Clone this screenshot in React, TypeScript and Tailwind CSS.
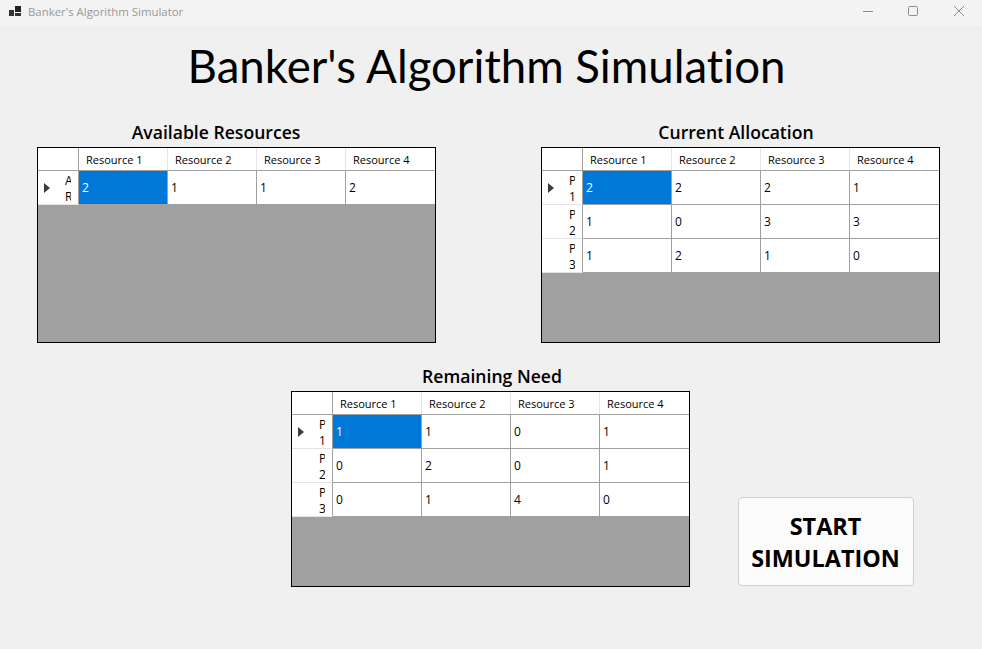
import React from 'react';

interface GridRow {
  label: [string, string];
  values: number[];
}

const available: GridRow[] = [{ label: ['A', 'R'], values: [2, 1, 1, 2] }];

const allocation: GridRow[] = [
  { label: ['P', '1'], values: [2, 2, 2, 1] },
  { label: ['P', '2'], values: [1, 0, 3, 3] },
  { label: ['P', '3'], values: [1, 2, 1, 0] },
];

const need: GridRow[] = [
  { label: ['P', '1'], values: [1, 1, 0, 1] },
  { label: ['P', '2'], values: [0, 2, 0, 1] },
  { label: ['P', '3'], values: [0, 1, 4, 0] },
];

const columns = ['Resource 1', 'Resource 2', 'Resource 3', 'Resource 4'];

// WinForms style DataGridView
const DataGrid = ({ title, titleClass, rows }: { title: string; titleClass: string; rows: GridRow[] }) => (
  <div className="flex w-[399px] flex-col">
    <h2 className={`mb-[3px] h-[24px] text-center text-[17.6px] leading-[24px] font-semibold text-black ${titleClass}`}>
      {title}
    </h2>
    <div className="flex h-[196px] flex-col border border-black bg-[#a0a0a0]">
      {/* Header */}
      <div className="flex h-[23px] border-b border-[#a0a0a0] bg-white">
        <div className="w-[41px] border-r border-[#a0a0a0]" />
        {columns.map((col) => (
          <div
            key={col}
            className="w-[89px] border-r border-[#e4e4e4] pl-[7px] text-[11px] leading-[23px] text-black last:border-r-0"
          >
            {col}
          </div>
        ))}
      </div>
      {/* Rows */}
      {rows.map((row, i) => (
        <div key={row.label[1]} className="flex h-[34px] bg-white">
          <div className="flex w-[41px] items-start border-r border-b border-r-[#a0a0a0] border-b-[#e4e4e4] bg-white">
            <div className="mt-[12px] ml-[6px] w-[6px]">
              {i === 0 && (
                <svg className="block" width="6" height="10" viewBox="0 0 6 10">
                  <path d="M0 0L6 5L0 10Z" fill="#3c3c3c" />
                </svg>
              )}
            </div>
            <div className="mt-[2px] ml-[15px] h-[31px] w-[6px] overflow-hidden text-[12px] leading-[16px] text-black">
              <div>{row.label[0]}</div>
              <div>{row.label[1]}</div>
            </div>
          </div>
          {row.values.map((value, j) => (
            <div
              key={j}
              className={
                i === 0 && j === 0
                  ? 'w-[89px] border-r border-b border-[#a0a0a0] bg-[#0078d7] pl-[3px] text-[12px] leading-[33px] text-white'
                  : 'w-[89px] border-r border-b border-[#a0a0a0] pl-[3px] text-[12px] leading-[33px] text-black last:border-r-0'
              }
            >
              {value}
            </div>
          ))}
        </div>
      ))}
    </div>
  </div>
);

export default function App() {
  return (
    <div className="flex h-[649px] w-[982px] flex-col overflow-hidden bg-[#f0f0f0] font-['Open_Sans','Noto_Sans',sans-serif]">
      {/* Title bar */}
      <div className="flex h-[26px] items-start justify-between bg-[#f3f3f3]">
        <div className="mt-[3px] flex items-center">
          <svg className="ml-[9px]" width="13" height="12" viewBox="0 0 13 12">
            <rect x="0" y="4" width="5" height="6" fill="#333" />
            <rect x="6" y="0" width="6" height="6" fill="#222" />
            <rect x="6" y="7" width="6" height="3" fill="#333" />
          </svg>
          <span className="ml-[6px] text-[11.4px] text-[#999]">Banker's Algorithm Simulator</span>
        </div>
        <div className="mt-[1px] flex items-center">
          <svg width="46" height="20" viewBox="0 0 46 20">
            <path d="M18 10.5H28" stroke="#8a8a8a" />
          </svg>
          <svg className="ml-[-1px]" width="46" height="20" viewBox="0 0 46 20">
            <rect x="18.5" y="5.5" width="9" height="9" rx="1" fill="none" stroke="#8a8a8a" />
          </svg>
          <svg width="46" height="20" viewBox="0 0 46 20">
            <path d="M18 5L28 15M28 5L18 15" stroke="#8a8a8a" />
          </svg>
        </div>
      </div>

      <h1 className="mt-[10px] h-[60px] pr-[9px] text-center font-['Lato',sans-serif] text-[45.6px] leading-[60px] text-black [font-variant-ligatures:none]">
        Banker's Algorithm Simulation
      </h1>

      <div className="mt-[24px] flex justify-between pr-[42px] pl-[37px]">
        <DataGrid title="Available Resources" titleClass="pr-[41px]" rows={available} />
        <DataGrid title="Current Allocation" titleClass="pr-[9px]" rows={allocation} />
      </div>

      <div className="mt-[21px] flex items-end pl-[291px]">
        <DataGrid title="Remaining Need" titleClass="pl-[3px]" rows={need} />
        <button className="mb-[1px] ml-[48px] h-[89px] w-[176px] rounded-[4px] border border-[#d0d0d0] bg-[#fbfbfb] pr-[1px] text-[23.4px] leading-[32px] font-bold text-black">
          START
          <br />
          SIMULATION
        </button>
      </div>
    </div>
  );
}
